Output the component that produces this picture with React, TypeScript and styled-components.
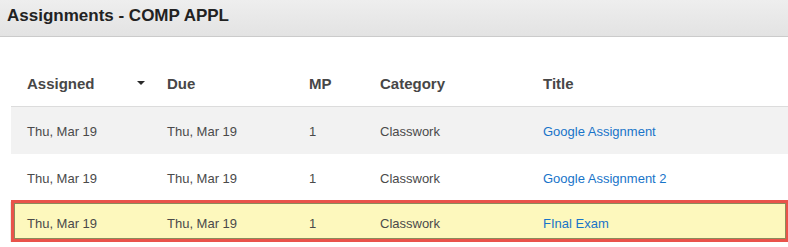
import React from "react";
import styled, { createGlobalStyle } from "styled-components";

const GlobalStyle = createGlobalStyle`
  html, body {
    margin: 0;
    padding: 0;
    background: #ffffff;
    font-family: "Liberation Sans", Arial, Helvetica, sans-serif;
  }
`;

const Page = styled.div`
  width: 788px;
  overflow: hidden;
`;

const TitleBar = styled.header`
  height: 37px;
  border-bottom: 1px solid #cbcbcb;
  background: linear-gradient(#eeeeee, #e3e3e3);
  padding: 0 0 4px 7px;
  box-sizing: border-box;
  display: flex;
  align-items: center;
`;

const Heading = styled.h1`
  margin: 0;
  font-size: 17px;
  font-weight: bold;
  color: #222222;
`;

const Table = styled.div`
  margin: 23px 0 0 11px;
  width: 778px;
`;

const columns = "140px 142px 71px 163px 1fr";

const HeadRow = styled.div`
  display: grid;
  grid-template-columns: ${columns};
  height: 46px;
  align-items: center;
  border-bottom: 1px solid #dcdcdc;
`;

const HeadCell = styled.div`
  padding-left: 16px;
  font-size: 15px;
  font-weight: bold;
  color: #474747;
  display: flex;
  align-items: center;
  justify-content: space-between;
  padding-right: 6px;
`;

const SortCaret = styled.span`
  width: 0;
  height: 0;
  border-left: 4px solid transparent;
  border-right: 4px solid transparent;
  border-top: 4px solid #2a2a2a;
  margin-top: -1px;
`;

type Tone = "shade" | "plain" | "flag";

const Row = styled.div<{ $tone: Tone }>`
  display: grid;
  grid-template-columns: ${columns};
  align-items: center;
  box-sizing: border-box;
  height: ${(p) => (p.$tone === "flag" ? "42px" : p.$tone === "shade" ? "47px" : "46px")};
  padding-top: ${(p) => (p.$tone === "flag" ? "4px" : "2px")};
  background: ${(p) =>
    p.$tone === "shade" ? "#f2f2f2" : p.$tone === "flag" ? "#fdf8bd" : "#ffffff"};
  box-shadow: ${(p) =>
    p.$tone === "flag"
      ? "inset 0 0 0 3px #e9534b, inset 0 0 0 4px #8c8a5c, 0 2px 1px rgba(110, 108, 60, 0.75)"
      : "none"};
`;

const Cell = styled.div`
  padding-left: 16px;
  font-size: 13px;
  color: #4a4a4a;
  white-space: nowrap;
`;

const TitleLink = styled.a`
  font-size: 13px;
  color: #1874c9;
  text-decoration: none;
  cursor: pointer;
`;

type Assignment = {
  assigned: string;
  due: string;
  mp: string;
  category: string;
  title: string;
  tone: Tone;
};

const assignments: Assignment[] = [
  { assigned: "Thu, Mar 19", due: "Thu, Mar 19", mp: "1", category: "Classwork", title: "Google Assignment", tone: "shade" },
  { assigned: "Thu, Mar 19", due: "Thu, Mar 19", mp: "1", category: "Classwork", title: "Google Assignment 2", tone: "plain" },
  { assigned: "Thu, Mar 19", due: "Thu, Mar 19", mp: "1", category: "Classwork", title: "FInal Exam", tone: "flag" },
];

export default function App() {
  return (
    <Page>
      <GlobalStyle />
      <TitleBar>
        <Heading>Assignments - COMP APPL</Heading>
      </TitleBar>
      <Table>
        <HeadRow>
          <HeadCell>
            Assigned
            <SortCaret />
          </HeadCell>
          <HeadCell>Due</HeadCell>
          <HeadCell>MP</HeadCell>
          <HeadCell>Category</HeadCell>
          <HeadCell>Title</HeadCell>
        </HeadRow>
        {assignments.map((a, i) => (
          <Row key={i} $tone={a.tone}>
            <Cell>{a.assigned}</Cell>
            <Cell>{a.due}</Cell>
            <Cell>{a.mp}</Cell>
            <Cell>{a.category}</Cell>
            <Cell>
              <TitleLink>{a.title}</TitleLink>
            </Cell>
          </Row>
        ))}
      </Table>
    </Page>
  );
}
